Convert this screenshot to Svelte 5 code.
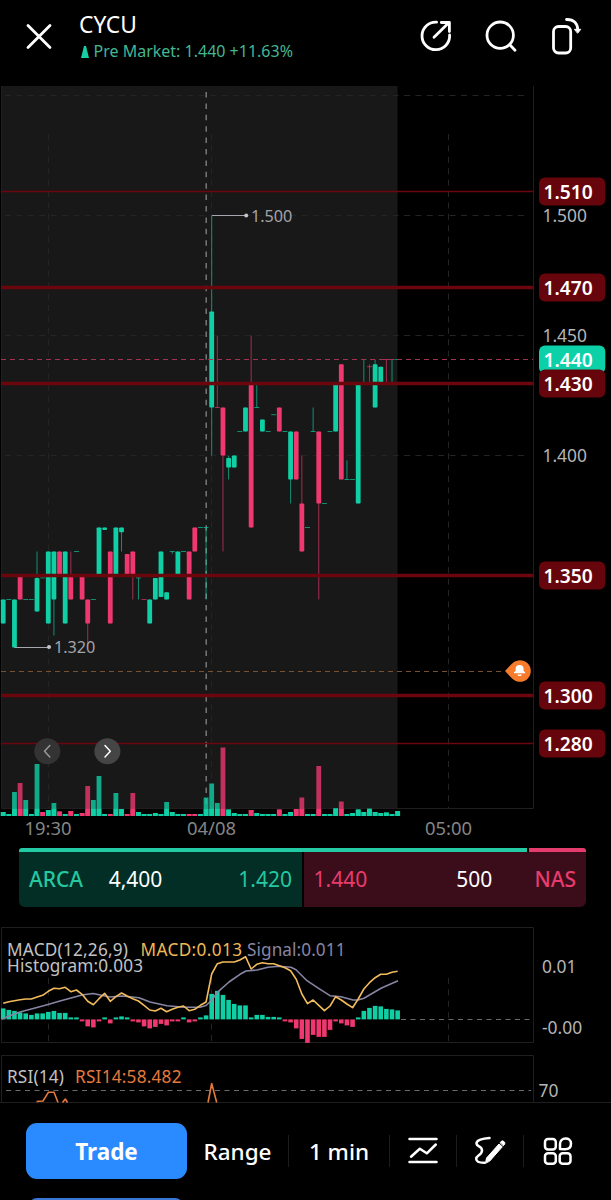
<script lang="ts">
  type Candle = [number, number, number, number, number]; // dir, body top, body bottom, high, low

  const STEP = 5.635;
  const x = (i: number) => 3.2 + i * STEP;
  // main chart starts below the 86px header
  const y = (price: number) => Math.round((129.5 + (1.5 - price) * 2400) * 10) / 10;

  const up = (top: number, bottom: number, high = top, low = bottom): Candle => [1, top, bottom, high, low];
  const down = (top: number, bottom: number, high = top, low = bottom): Candle => [-1, top, bottom, high, low];
  const flat = (p: number, high = p, low = p): Candle => [1, p, p, high, low];
  const flatDown = (p: number, high = p, low = p): Candle => [-1, p, p, high, low];

  const candles: Candle[] = [
    up(1.34, 1.33), flat(1.34), up(1.34, 1.32), down(1.35, 1.34), flat(1.34), flat(1.34),
    up(1.349, 1.335, 1.36), flat(1.349), up(1.36, 1.33), up(1.36, 1.34, 1.36, 1.325),
    down(1.36, 1.35), up(1.36, 1.33), down(1.35, 1.34, 1.36), flat(1.36), down(1.35, 1.34),
    down(1.34, 1.33, 1.34, 1.32), flat(1.34), up(1.37, 1.35), up(1.37, 1.369), down(1.36, 1.33),
    up(1.37, 1.35), up(1.37, 1.368, 1.37, 1.36), down(1.359, 1.35), down(1.36, 1.35, 1.36, 1.34),
    flat(1.349, 1.349, 1.34), flatDown(1.34), up(1.34, 1.33), up(1.349, 1.34), up(1.36, 1.341),
    up(1.343, 1.34), flat(1.36, 1.36, 1.359), up(1.36, 1.35), flat(1.36), down(1.36, 1.34),
    down(1.37, 1.36), flat(1.37), flat(1.37, 1.37, 1.34),
    up(1.46, 1.42, 1.5, 1.4), flatDown(1.42, 1.45), down(1.42, 1.4, 1.42, 1.36),
    up(1.399, 1.395, 1.4, 1.39), up(1.4, 1.395), flat(1.41), up(1.42, 1.41), down(1.43, 1.37, 1.45),
    flat(1.42, 1.43), up(1.415, 1.41), flat(1.41), flat(1.417), down(1.42, 1.41), flat(1.41),
    up(1.41, 1.39, 1.41, 1.38), down(1.41, 1.39), down(1.38, 1.36, 1.4), flat(1.37), flat(1.41, 1.42),
    down(1.41, 1.38, 1.41, 1.34), flat(1.38), flat(1.41), up(1.43, 1.41), down(1.438, 1.39),
    flat(1.39, 1.398), flat(1.39), up(1.43, 1.38), flat(1.44, 1.44, 1.43),
    flatDown(1.437, 1.438, 1.43), up(1.438, 1.42, 1.44), up(1.437, 1.43),
    flatDown(1.44, 1.44, 1.43), flat(1.44, 1.44, 1.43), flat(1.44)
  ];

  // negative = red bar
  const volume = [
    4, 2, 24, -33, 16, 2, 52, -4, 6, 13, -4.5, 2, -5, 2, -3, -30, 16, 40, 2, -2, 23, 7, -2, -23,
    4, 2, 2, 3, 2, 14, 4, 2, 2, -2, -2, 2, 18.5, 32.5, 13, -68.5, 6.5, 3, 2, 2, -6, 3, 2, 2, 2, -6.5,
    2, 4, -7, -18.5, 2, 2, -50, 2, 2, 8, -14.5, 2, 3, 6.5, 4, 7.5, 4, 3, 3.5, 2, 5
  ];

  const histogram = [
    11, 9.5, 8.5, 7, 6, 4.5, 6, 6, 7.5, 8.5, 6.5, 6.5, 2, 2, -2, -7, -8, -2, 2, -4, 2, 3, 2, -2,
    -3, -7, -9, -7.5, -4.5, -6, -2, -2, 2, -3, -2, 2, 4, 25.5, 28.5, 24.5, 19.5, 15.5, 14, 14, 2,
    4.5, 4.5, 2.5, 2.5, 2, -2, -3, -9, -19.5, -23.5, -15.5, -17.5, -17.5, -10.5, -2, -4, -6, -7.5,
    2, 8.5, 11.5, 13.5, 13, 10.5, 10, 9
  ];

  const macd = [
    77.3, 75.7, 74.7, 73.7, 73, 73, 71, 69.3, 65.3, 62.3, 62.7, 61.3, 65.7, 64, 68.3, 75.3, 78.7,
    72.7, 67.3, 75.3, 70.7, 67, 70, 72.7, 75, 79.3, 84, 85, 82.3, 85.7, 83.3, 81.3, 80, 84.7, 83.3,
    79.3, 76, 48, 37.7, 36, 36, 36, 34, 30.7, 43, 38.3, 36.7, 37.7, 37.7, 39.7, 41.7, 44.7, 53.3,
    68, 77.7, 74, 79.3, 84.7, 80, 70.7, 74, 78, 81.7, 73, 63, 56.7, 51.7, 48.3, 48.3, 46.3, 45.3
  ];
  const macdPoints = macd.map((v, i) => `${x(i)},${v + 6}`).join(' ');

  const signalPoints =
    '2,99 9,96 20,92 37,87.5 48,84.5 60,81 71,78 82,75 93,73.5 110,77 122,76 139,77.7 150,82 167,85.7 184,87.3 200,87.3 206,85.5 212,80 217,72.7 229,62 240,54.3 246,51 257,50 268,47.3 279,46.3 291,47.3 296,49.7 307,60.7 319,68.7 330,75.7 341,76.7 353,80 358,80 364,78.3 381,68.3 398,60.7';

  const levels = [
    { price: 1.51, width: 1.4 },
    { price: 1.47, width: 3.4 },
    { price: 1.43, width: 3.4 },
    { price: 1.35, width: 3.4 },
    { price: 1.3, width: 3.4 },
    { price: 1.28, width: 1.4 }
  ];
  const ticks = [1.5, 1.45, 1.4];
  const times = [
    { label: '19:30', at: 48 },
    { label: '04/08', at: 211.5 },
    { label: '05:00', at: 448.5 }
  ];
  const verticals = [48.5, 211.5, 448.5];
</script>

<div class="screen">
  <header>
    <svg class="close" width="30" height="30" viewBox="0 0 30 30">
      <path d="M4 4.5 26 26.5M26 4.5 4 26.5" />
    </svg>
    <div class="title">
      <h1>CYCU</h1>
      <p>
        <svg width="8" height="12" viewBox="0 0 8 12"><path d="M3 0H5L8 12H0z" /></svg>
        <span>Pre Market: 1.440 +11.63%</span>
      </p>
    </div>
    <div class="actions">
      <svg width="36" height="40" viewBox="0 0 36 40">
        <path d="M18.6 6.1A13.8 13.8 0 1 0 31.6 19M16 21.2 30.5 7M23.3 6.5H31.4V15.5" />
      </svg>
      <svg width="36" height="40" viewBox="0 0 36 40">
        <circle cx="17.2" cy="19.2" r="13.2" />
        <path d="M26.8 28.8 32 34.3" />
      </svg>
      <svg width="36" height="40" viewBox="0 0 36 40">
        <rect x="5.5" y="10.5" width="17.2" height="26.5" rx="5" />
        <path d="M18.5 3.5C25.5 3.2 29.6 7 29.8 14" />
        <path class="solid" d="M26.8 13.3H32.8L29.8 17z" />
      </svg>
    </div>
  </header>

  <svg class="chart" width="611" height="762" viewBox="0 0 611 762">
    <rect class="session" x="1" y="0" width="396.5" height="722" />
    <g class="grid">
      {#each [9.5, 129.5, 249.5, 369.5] as gy}
        <path d="M5 {gy}H529" />
      {/each}
      {#each verticals as vx}
        <path d="M{vx} 48V722" />
      {/each}
    </g>
    <path class="frame" d="M1.5 0V722.5H533.5V0" />
    <path class="session-split" d="M206.2 6V722" />

    {#each volume as v, i}
      {@const h = Math.abs(v)}
      <rect class="vol {v > 0 ? 'up' : 'down'}" x={x(i) - 2.4} y={730 - h} width="4.8" height={h} />
      <rect class={v > 0 ? 'up' : 'down'} x={x(i) - 2.4} y={730 - Math.min(h, 7)} width="4.8" height={Math.min(h, 7)} />
    {/each}

    {#each candles as [dir, top, bottom, high, low], i}
      <g class={dir > 0 ? 'up' : 'down'}>
        {#if high > low}
          <rect class="wick" x={x(i) - 0.5} y={y(high)} width="1" height={y(low) - y(high)} />
        {/if}
        {#if top === bottom}
          <rect class="wick" x={x(i) - 2.5} y={y(top) - 0.5} width="5" height="1" />
        {:else}
          <rect x={x(i) - 2.4} y={y(top)} width="4.8" height={y(bottom) - y(top)} rx="0.8" />
        {/if}
      </g>
    {/each}

    <path class="last-line" d="M1 {y(1.44)}H533" />
    <path class="alert-line" d="M1 {y(1.31)}H505" />
    {#each levels as level}
      <path class="level" d="M1 {y(level.price)}H533" stroke-width={level.width} />
    {/each}

    <g class="marker">
      <path d="M212 129.5H246M14.5 561.5H49" />
      <circle cx="246.2" cy="129.5" r="2" />
      <circle cx="49" cy="561" r="2" />
      <text x="251" y="135.6">1.500</text>
      <text x="54" y="567">1.320</text>
    </g>

    <g class="pager">
      <circle cx="47.3" cy="665.2" r="13" fill="#333" />
      <path d="M49.8 659.5 44.5 665.2 49.8 670.9" stroke="#999" />
      <circle cx="107.4" cy="665.2" r="13" fill="#454545" />
      <path d="M105 659.5 110.3 665.2 105 670.9" stroke="#fff" />
    </g>

    <g class="pin">
      <path class="drop" d="M505 585C510 580 513.5 574.2 520 574.2A10.8 10.8 0 0 1 520 595.8C513.5 595.8 510 590 505 585z" />
      <path class="bell" d="M514 587.2V586.2L515.6 585V583A4 4 0 0 1 523.6 583V585L525.2 586.2V587.2zM517.3 588.4H521.9L521 590H518.2z" />
    </g>

    {#each ticks as tick}
      <text class="tick" x="542.5" y={y(tick) + 6.5}>{tick.toFixed(3)}</text>
    {/each}
    <rect class="last-tag" x="539" y={y(1.44) - 14} width="66.3" height="28" rx="6" />
    <text class="tag-text" x="543.5" y={y(1.44) + 7.5}>1.440</text>
    {#each levels as level}
      <rect class="level-tag" x="539" y={y(level.price) - 14} width="66.3" height="28" rx="6" />
      <text class="tag-text" x="543.5" y={y(level.price) + 7.5}>{level.price.toFixed(3)}</text>
    {/each}

    {#each times as time}
      <text class="time" x={time.at} y="749">{time.label}</text>
    {/each}
  </svg>

  <section class="quote">
    <div class="ratio"><i class="buy"></i><i class="sell"></i></div>
    <div class="sides">
      <div class="bid">
        <b>ARCA</b><span class="size">4,400</span><span class="price">1.420</span>
      </div>
      <div class="ask">
        <span class="price">1.440</span><span class="size">500</span><b>NAS</b>
      </div>
    </div>
  </section>

  <svg class="chart macd" width="611" height="124" viewBox="0 0 611 124">
    <g class="grid">
      {#each verticals as vx}
        <path d="M{vx} 58V121" />
      {/each}
    </g>
    <path class="frame" d="M1.5 7.5H533.5V122.5H1.5z" />
    <path class="zero" d="M401 99.5H531" />
    {#each histogram as h, i}
      <rect class={h > 0 ? 'up' : 'down'} x={x(i) - 2.3} y={h > 0 ? 99.4 - h : 99.4} width="4.6" height={Math.abs(h)} />
    {/each}
    <polyline class="signal-line" points={signalPoints} />
    <polyline class="macd-line" points={macdPoints} />
    <text class="legend" x="7" y="36" textLength="121">MACD(12,26,9)</text>
    <text class="legend macd-text" x="140.5" y="36" textLength="101.5">MACD:0.013</text>
    <text class="legend signal-text" x="247" y="36" textLength="98.5">Signal:0.011</text>
    <text class="legend" x="7" y="51.7" textLength="136">Histogram:0.003</text>
    <text class="tick" x="542" y="53.2">0.01</text>
    <text class="tick" x="542" y="114">-0.00</text>
  </svg>

  <svg class="chart rsi" width="611" height="59" viewBox="0 0 611 59">
    <path class="frame" d="M1.5 58V11.500H533.5V58M0 58.5H611" />
    <path class="zero" d="M6 46.5H531" />
    <path class="rsi-line" d="M36.5 57.5 43 57 48.5 48.2H54L58 58.5M62.5 58.5 65.3 55 67.5 58.5M208 58.5 211.7 39.5 216.7 58.5" />
    <text class="legend" x="7" y="39.3" textLength="57">RSI(14)</text>
    <text class="legend rsi-text" x="75" y="39.3" textLength="106.5">RSI14:58.482</text>
    <text class="tick" x="538.5" y="53">70</text>
  </svg>

  <nav>
    <button class="trade">Trade</button>
    <button class="range">Range</button>
    <button class="interval">1 min</button>
    <button class="tool">
      <svg width="32" height="32" viewBox="0 0 32 32">
        <path d="M2.5 4.1H29.5M2.5 26.9H29.5M4 21.7 12.8 13.8 19.8 18.3 28.8 9.5" />
      </svg>
    </button>
    <button class="tool">
      <svg width="32" height="32" viewBox="0 0 32 32">
        <path d="M15.5 3C9 3.5 2 5 2.5 8.8C3 12 8 11 8 15.5C8 20.5 2 20 2.2 24C2.5 27 6 27.8 10.500 27.700" />
        <path class="solid" d="M11.500 28 12.500 23 25 9 28.300 11.800 16 25.800zM26.300 7.500 27.300 6.300Q28.500 5.300 30 6.600T30.600 9.400L29.500 10.500z" />
      </svg>
    </button>
    <button class="tool last">
      <svg width="32" height="32" viewBox="0 0 32 32">
        <rect x="3" y="4" width="10.800" height="10.500" rx="3" />
        <path d="M18 14V9C18 2 29 1.500 29 8.500C29 12.500 26.500 14.300 23 14.300z" />
        <rect x="3" y="18.300" width="10.800" height="10.500" rx="3" />
        <rect x="17.700" y="18.300" width="10.800" height="10.500" rx="3" />
      </svg>
    </button>
  </nav>
  <div class="peek"></div>
</div>

<style>
  :global(body) {
    margin: 0;
    background: #000;
  }

  .screen {
    display: flex;
    flex-direction: column;
    width: 611px;
    height: 1200px;
    overflow: hidden;
    background: #000;
    color: #fff;
    font-family: 'Noto Sans', 'Open Sans', sans-serif;
  }

  svg {
    display: block;
    flex: none;
  }

  /* Header */
  header {
    display: flex;
    align-items: flex-start;
    height: 86px;
    flex: none;
  }

  .close {
    margin: 21px 0 0 24px;
  }

  .close path,
  .actions svg,
  .tool svg {
    fill: none;
    stroke: #fff;
    stroke-width: 2.8;
    stroke-linecap: round;
    stroke-linejoin: round;
  }

  .title {
    margin: 10px 0 0 25px;
  }

  h1 {
    margin: 0;
    font-size: 22.8px;
    font-weight: 400;
    line-height: 30px;
  }

  .title p {
    display: flex;
    align-items: center;
    gap: 5px;
    margin: 0 0 0 1.500px;
    color: #43b792;
    font-size: 16px;
    line-height: 23px;
    white-space: nowrap;
  }

  .title p svg {
    fill: #16cfa5;
  }

  .actions {
    display: flex;
    gap: 29px;
    margin: 16px 27.500px 0 auto;
  }

  .actions svg {
    overflow: visible;
  }

  .actions .solid,
  .tool .solid {
    fill: #fff;
    stroke-width: 1;
  }

  /* Charts */
  .chart path,
  .chart polyline {
    fill: none;
  }

  .session {
    fill: #181818;
  }

  .grid path {
    stroke: #242424;
    stroke-dasharray: 6 5.4;
  }

  .frame {
    stroke: #1f1f1f;
  }

  .session-split {
    stroke: #858585;
    stroke-width: 1.3;
    stroke-dasharray: 5.5 5.9;
  }

  .up {
    fill: #10cfa5;
  }

  .down {
    fill: #ee386f;
  }

  .vol {
    opacity: 0.8;
  }

  .wick {
    opacity: 0.65;
  }

  .last-line {
    stroke: #a23452;
    stroke-dasharray: 5 4;
  }

  .alert-line {
    stroke: #7a512f;
    stroke-dasharray: 5 4;
  }

  .level {
    stroke: #6c060d;
  }

  .marker path {
    stroke: #a6a6ae;
    stroke-width: 1.2;
  }

  .marker circle {
    fill: #c4c4ca;
  }

  .marker text {
    fill: #a3a3a8;
    font-size: 16.2px;
  }

  .pager path {
    stroke-width: 1.5;
    stroke-linecap: round;
    stroke-linejoin: round;
  }

  .pin .drop {
    fill: #f67b2b;
  }

  .pin .bell {
    fill: #fff;
  }

  .tick {
    fill: #b5b5b5;
    font-size: 17.4px;
  }

  .tag-text {
    fill: #fff;
    font-size: 19.2px;
    font-weight: 600;
  }

  .last-tag {
    fill: #0bd0a8;
  }

  .level-tag {
    fill: #67050c;
  }

  .time {
    fill: #858585;
    font-size: 18.4px;
    text-anchor: middle;
  }

  /* Bid / ask */
  .quote {
    width: 567px;
    margin: 0 0 0 19px;
    flex: none;
  }

  .ratio {
    display: flex;
    gap: 2px;
    height: 4px;
    border-radius: 3px 3px 0 0;
    overflow: hidden;
  }

  .buy {
    width: 508px;
    background: #22cba3;
  }

  .sell {
    flex: 1;
    background: #e53c6e;
  }

  .sides {
    display: flex;
    gap: 1.5px;
    height: 55px;
    border-radius: 0 0 6px 6px;
    overflow: hidden;
    font-size: 21px;
  }

  .bid,
  .ask {
    display: flex;
    align-items: center;
    box-sizing: border-box;
    padding: 0 10px 1px;
  }

  .bid {
    width: 283px;
    background: #022e26;
    color: #25c8a0;
  }

  .ask {
    flex: 1;
    background: #3b0c1a;
    color: #e83c6e;
  }

  .quote b {
    font-weight: 500;
  }

  .size {
    color: #fff;
  }

  .bid .size {
    margin-left: 25.5px;
  }

  .bid .price {
    margin-left: auto;
  }

  .ask .size {
    margin: 0 42px 0 auto;
  }

  /* Indicators */
  .macd {
    margin-top: 13px;
  }

  .zero {
    stroke: #6b6b6b;
    stroke-dasharray: 5 4.5;
  }

  .macd-line,
  .signal-line,
  .rsi-line {
    stroke-width: 1.6;
    stroke-linejoin: round;
  }

  .macd-line {
    stroke: #f2bb5c;
  }

  .signal-line {
    stroke: #8785a3;
  }

  .rsi-line {
    stroke: #e5793c;
  }

  .legend {
    fill: #c2c2c2;
    font-size: 17.2px;
  }

  .macd-text {
    fill: #efb856;
  }

  .signal-text {
    fill: #8785a3;
  }

  .rsi-text {
    fill: #e5793c;
  }

  /* Toolbar */
  nav {
    display: flex;
    align-items: center;
    height: 56px;
    margin: 20px 0 0 26px;
    flex: none;
  }

  button {
    display: flex;
    align-items: center;
    justify-content: center;
    height: 32px;
    padding: 0;
    border: 0;
    border-right: 1px solid #1c1c1c;
    background: none;
    color: #fff;
    font-family: inherit;
    font-size: 22.5px;
    font-weight: 500;
  }

  .trade {
    width: 161px;
    height: 56px;
    border: 0;
    border-radius: 11px;
    background: #2a8aff;
    font-weight: 700;
  }

  .range {
    width: 102px;
  }

  .interval {
    width: 101px;
  }

  .tool {
    width: 67px;
  }

  .tool.last {
    border: 0;
  }

  .tool svg {
    stroke-width: 2.5;
  }

  .peek {
    width: 154px;
    height: 20px;
    margin: 19px 0 0 29px;
    border-radius: 8px 8px 0 0;
    background: #3a78d8;
    flex: none;
  }
</style>
